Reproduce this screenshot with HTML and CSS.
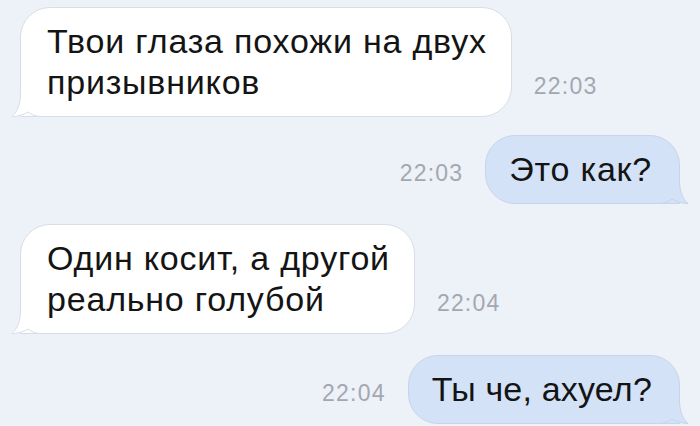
FILE: index.html
```html
<!DOCTYPE html>
<html lang="ru">
<head>
    <meta charset="UTF-8">
    <meta name="viewport" content="width=device-width, initial-scale=1.0">
    <title>Переписка</title>
    <link rel="stylesheet" href="styles.css">
</head>
<body>
    <div class="chat">
        <div class="row in first">
            <div class="bubble">
                Твои глаза похожи на двух<br>призывников
                <svg class="tail" viewBox="0 0 30 24"><path class="fill" d="M9.5 0 C9.5 12 6 19 1 23.5 C7 23.5 13 21.5 17 19 C20 21.5 25 23.5 30 23.5 L30 0 Z"/><path class="edge" d="M9.5 0 C9.5 12 6 19 1 23.5 C7 23.5 13 21.5 17 19 C20 21.5 25 23.5 30 23.5"/></svg>
            </div>
            <span class="time">22:03</span>
        </div>

        <div class="row out second">
            <span class="time">22:03</span>
            <div class="bubble">
                Это как?
                <svg class="tail" viewBox="0 0 30 24"><path class="fill" d="M9.5 0 C9.5 12 6 19 1 23.5 C7 23.5 13 21.5 17 19 C20 21.5 25 23.5 30 23.5 L30 0 Z"/><path class="edge" d="M9.5 0 C9.5 12 6 19 1 23.5 C7 23.5 13 21.5 17 19 C20 21.5 25 23.5 30 23.5"/></svg>
            </div>
        </div>

        <div class="row in third">
            <div class="bubble">
                Один косит, а другой<br>реально голубой
                <svg class="tail" viewBox="0 0 30 24"><path class="fill" d="M9.5 0 C9.5 12 6 19 1 23.5 C7 23.5 13 21.5 17 19 C20 21.5 25 23.5 30 23.5 L30 0 Z"/><path class="edge" d="M9.5 0 C9.5 12 6 19 1 23.5 C7 23.5 13 21.5 17 19 C20 21.5 25 23.5 30 23.5"/></svg>
            </div>
            <span class="time">22:04</span>
        </div>

        <div class="row out fourth">
            <span class="time">22:04</span>
            <div class="bubble">
                Ты че, ахуел?
                <svg class="tail" viewBox="0 0 30 24"><path class="fill" d="M9.5 0 C9.5 12 6 19 1 23.5 C7 23.5 13 21.5 17 19 C20 21.5 25 23.5 30 23.5 L30 0 Z"/><path class="edge" d="M9.5 0 C9.5 12 6 19 1 23.5 C7 23.5 13 21.5 17 19 C20 21.5 25 23.5 30 23.5"/></svg>
            </div>
        </div>
    </div>
</body>
</html>
```

FILE: styles.css
```css
body {
    margin: 0;
    background-color: #edf1f8; /* pale blue chat background */
    font-family: "Liberation Sans", Arial, sans-serif;
    color: #141414;
    overflow: hidden;
}

.chat {
    display: flex;
    flex-direction: column;
    padding: 7px 20px 0 20px;
}

.row {
    display: flex;
    align-items: flex-end;
    gap: 22px;
}

.row.out {
    justify-content: flex-end;
}

.second { margin-top: 18px; }
.third { margin-top: 20px; }
.fourth { margin-top: 21px; }

.bubble {
    position: relative;
    font-size: 34px;
    letter-spacing: 0.8px;
    line-height: 41px;
    padding: 13px 24px 13px 26px;
    border-radius: 30px;
    white-space: nowrap;
}

.in .bubble {
    background-color: #ffffff;
    border: 1px solid #d9dee5;
    border-bottom-left-radius: 0;
}

.out .bubble {
    background-color: #d3e2f6;
    border: 1px solid #c6d5e9;
    border-bottom-right-radius: 0;
    padding: 13px 27px 13px 23px;
}

.fourth .bubble {
    letter-spacing: 0.2px;
}

.tail {
    position: absolute;
    bottom: -1px;
    width: 30px;
    height: 24px;
}

.in .tail {
    left: -10px;
}

.out .tail {
    right: -10px;
    transform: scaleX(-1);
}

.tail .edge {
    fill: none;
    stroke-width: 1;
}

.in .tail .fill { fill: #ffffff; }
.in .tail .edge { stroke: #d9dee5; }
.out .tail .fill { fill: #d3e2f6; }
.out .tail .edge { stroke: #c6d5e9; }

.time {
    font-size: 23px;
    letter-spacing: 1.2px;
    color: #a3a8af;
    margin-bottom: 17px;
}
```
